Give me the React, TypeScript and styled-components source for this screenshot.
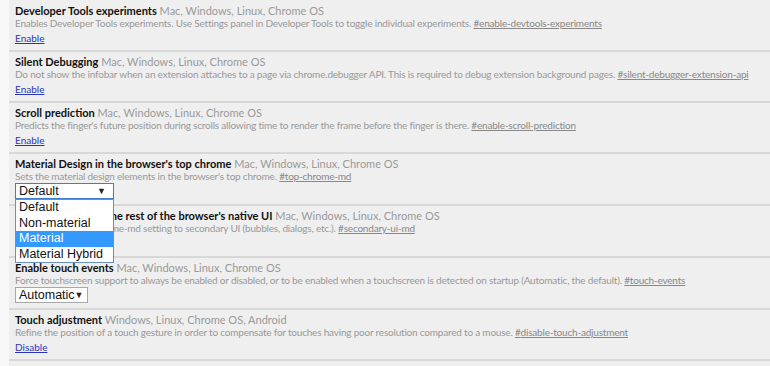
import React from 'react'
import { styled, createGlobalStyle } from 'styled-components'

const Global = createGlobalStyle`
  body {
    margin: 0;
    background: #f8f8f8;
    font-family: Lato, "Open Sans", sans-serif;
  }
`

const Page = styled.div`
  margin-left: 9px;
  padding-top: 1px;
  background: #efefef;
  height: 365px;
  overflow: hidden;
`

const Experiment = styled.div<{ $tall?: boolean }>`
  position: relative;
  height: ${p => (p.$tall ? 47 : 46)}px;
  padding: 3px 6px 0;
  border-bottom: 2px solid #d8d8d8;
`

const TitleRow = styled.div`
  font-size: 11px;
  line-height: 13px;
  white-space: nowrap;
`

const Name = styled.span`
  font-weight: 700;
  color: #111;
`

const Platforms = styled.span`
  color: #9a9a9a;
`

const Description = styled.div`
  font-size: 10px;
  line-height: 13px;
  letter-spacing: -0.2px;
  color: #999;
  white-space: nowrap;
`

const Permalink = styled.a`
  color: #888;
  text-decoration: underline;
`

const Action = styled.a`
  display: block;
  width: fit-content;
  margin-top: 2px;
  font-size: 10px;
  line-height: 13px;
  color: #2b35b8;
  text-decoration: underline;
`

const Select = styled.div<{ $focused?: boolean }>`
  display: flex;
  align-items: center;
  justify-content: space-between;
  height: 14px;
  padding: 0 7px 0 3px;
  background: #fff;
  border: 1px solid ${p => (p.$focused ? '#3c7fd1' : '#a8a8a8')};
  font-family: "Liberation Sans", Arial, sans-serif;
  font-size: 12.5px;
  line-height: 14px;
  color: #111;
`

const Arrow = styled.span`
  font-size: 9px;
  color: #222;
`

const Menu = styled.ul`
  position: absolute;
  left: 6px;
  top: 45px;
  z-index: 2;
  width: 97px;
  margin: 0;
  padding: 0;
  list-style: none;
  background: #fff;
  border: 1px solid #6a8fc6;
  font-family: "Liberation Sans", Arial, sans-serif;
  font-size: 12.5px;
`

const Option = styled.li<{ $active?: boolean }>`
  height: 15.5px;
  line-height: 15.5px;
  padding-left: 3px;
  color: ${p => (p.$active ? '#fff' : '#111')};
  background: ${p => (p.$active ? '#3399ff' : 'transparent')};
`

type Item = {
  name: string
  platforms: string
  desc: string
  hash: string
  action?: string
  select?: { value: string; width: number; focused?: boolean; options?: string[]; active?: number }
}

const items: Item[] = [
  {
    name: 'Developer Tools experiments',
    platforms: 'Mac, Windows, Linux, Chrome OS',
    desc: 'Enables Developer Tools experiments. Use Settings panel in Developer Tools to toggle individual experiments.',
    hash: 'enable-devtools-experiments',
    action: 'Enable',
  },
  {
    name: 'Silent Debugging',
    platforms: 'Mac, Windows, Linux, Chrome OS',
    desc: 'Do not show the infobar when an extension attaches to a page via chrome.debugger API. This is required to debug extension background pages.',
    hash: 'silent-debugger-extension-api',
    action: 'Enable',
  },
  {
    name: 'Scroll prediction',
    platforms: 'Mac, Windows, Linux, Chrome OS',
    desc: "Predicts the finger's future position during scrolls allowing time to render the frame before the finger is there.",
    hash: 'enable-scroll-prediction',
    action: 'Enable',
  },
  {
    name: "Material Design in the browser's top chrome",
    platforms: 'Mac, Windows, Linux, Chrome OS',
    desc: "Sets the material design elements in the browser's top chrome.",
    hash: 'top-chrome-md',
    select: {
      value: 'Default',
      width: 99,
      focused: true,
      options: ['Default', 'Non-material', 'Material', 'Material Hybrid'],
      active: 2,
    },
  },
  {
    name: "Material Design in the rest of the browser's native UI",
    platforms: 'Mac, Windows, Linux, Chrome OS',
    desc: 'Extends the --top-chrome-md setting to secondary UI (bubbles, dialogs, etc.).',
    hash: 'secondary-ui-md',
    select: { value: 'Default', width: 99 },
  },
  {
    name: 'Enable touch events',
    platforms: 'Mac, Windows, Linux, Chrome OS',
    desc: 'Force touchscreen support to always be enabled or disabled, or to be enabled when a touchscreen is detected on startup (Automatic, the default).',
    hash: 'touch-events',
    select: { value: 'Automatic', width: 73 },
  },
  {
    name: 'Touch adjustment',
    platforms: 'Windows, Linux, Chrome OS, Android',
    desc: 'Refine the position of a touch gesture in order to compensate for touches having poor resolution compared to a mouse.',
    hash: 'disable-touch-adjustment',
    action: 'Disable',
  },
]

export default function App() {
  return (
    <Page>
      <Global />
      {items.map(it => (
        <Experiment key={it.hash} $tall={!!it.select}>
          <TitleRow>
            <Name>{it.name}</Name> <Platforms>{it.platforms}</Platforms>
          </TitleRow>
          <Description>
            {it.desc} <Permalink>#{it.hash}</Permalink>
          </Description>
          {it.action && <Action>{it.action}</Action>}
          {it.select && (
            <>
              <Select $focused={it.select.focused} style={{ width: it.select.width - 12 }}>
                <span>{it.select.value}</span>
                <Arrow>▼</Arrow>
              </Select>
              {it.select.options && (
                <Menu>
                  {it.select.options.map((o, i) => (
                    <Option key={o} $active={i === it.select!.active}>
                      {o}
                    </Option>
                  ))}
                </Menu>
              )}
            </>
          )}
        </Experiment>
      ))}
    </Page>
  )
}
